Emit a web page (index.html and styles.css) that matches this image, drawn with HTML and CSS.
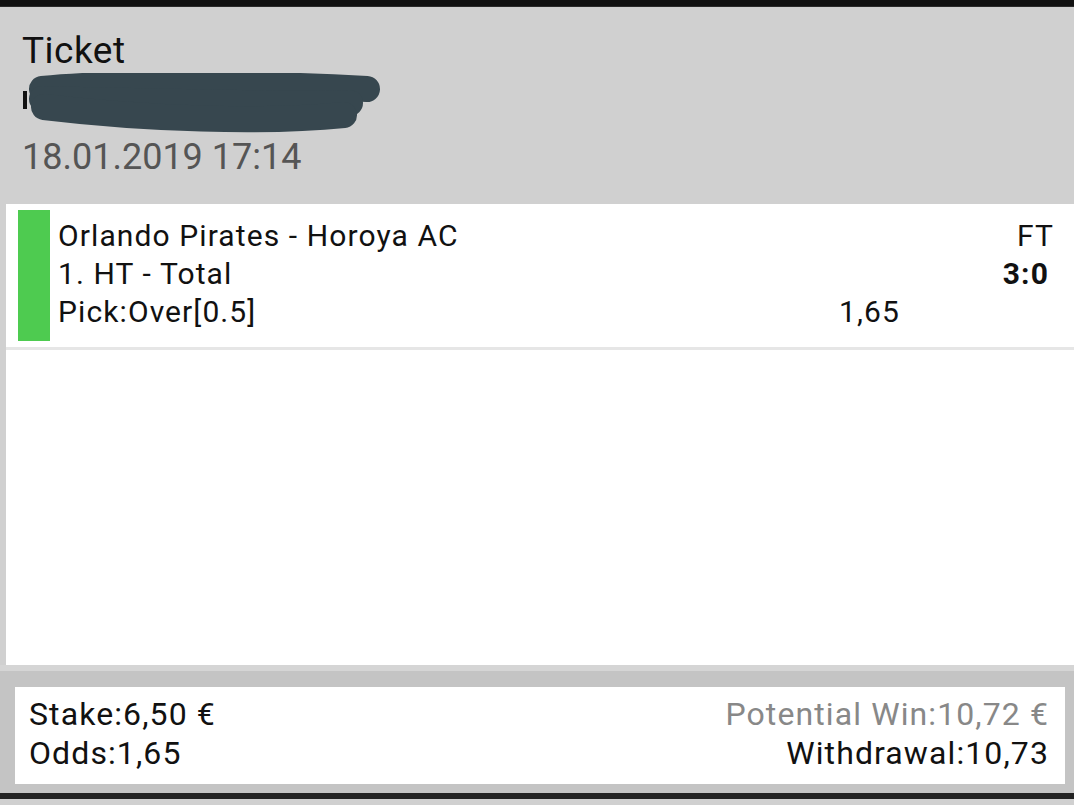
FILE: index.html
```html
<!DOCTYPE html>
<html>
<head>
    <meta charset="UTF-8">
    <title>Ticket</title>
    <link rel="stylesheet" href="styles.css">
</head>
<body>

    <div class="status_bar"></div>

    <div class="ticket_head">
        <div class="ticket_title">Ticket</div>
        <div class="ticket_id">
            <span class="id_mark"></span>
            <svg class="scribble" width="370" height="66" viewBox="0 0 370 66">
                <path d="M18 16 C 100 8, 230 10, 343 16" />
                <path d="M18 26 C 110 28, 230 32, 326 30" />
                <path d="M20 34 C 120 46, 240 50, 320 42" />
            </svg>
        </div>
        <div class="ticket_date">18.01.2019 17:14</div>
    </div>

    <div class="ticket_body">
        <div class="bet_row">
            <div class="bet_state"></div>
            <div class="bet_info">
                <div class="bet_name">Orlando Pirates - Horoya AC</div>
                <div class="bet_odds"></div>
                <div class="bet_result">FT</div>

                <div class="bet_name">1. HT - Total</div>
                <div class="bet_odds"></div>
                <div class="bet_result score">3:0</div>

                <div class="bet_name">Pick:Over[0.5]</div>
                <div class="bet_odds">1,65</div>
                <div class="bet_result"></div>
            </div>
        </div>
    </div>

    <div class="ticket_foot">
        <div class="foot_box">
            <div class="foot_col">
                <div>Stake:6,50 €</div>
                <div>Odds:1,65</div>
            </div>
            <div class="foot_col right">
                <div class="potential">Potential Win:10,72 €</div>
                <div>Withdrawal:10,73</div>
            </div>
        </div>
    </div>

    <div class="nav_bar"></div>

</body>
</html>
```

FILE: styles.css
```css
*{
    margin: 0;
    padding: 0;
    box-sizing: border-box;
}
body{
    width: 1074px;
    height: 805px;
    overflow: hidden;
    background: #d0d0d0;
    font-family: Roboto, "Noto Sans", sans-serif;
    color: #111;
}
.status_bar{
    height: 7px;
    background: #111;
    border-bottom: 1px solid #2a2a2a;
}
.ticket_head{
    height: 197px;
    padding: 22px 22px 0 22px;
}
.ticket_title{
    font-size: 37px;
    line-height: 44px;
    letter-spacing: 0.5px;
    color: #111;
}
.ticket_id{
    position: relative;
    height: 62px;
}
.id_mark{
    position: absolute;
    left: 1px;
    top: 18px;
    width: 4px;
    height: 18px;
    background: #111;
}
.scribble{
    position: absolute;
    left: 2px;
    top: 0;
}
.scribble path{
    fill: none;
    stroke: #37474f;
    stroke-width: 26px;
    stroke-linecap: round;
}
.ticket_date{
    font-size: 36px;
    line-height: 44px;
    color: #555;
}

.ticket_body{
    height: 461px;
    margin-left: 6px;
    background: #fff;
}
.bet_row{
    display: flex;
    padding: 6px 20px 6px 12px;
    border-bottom: 3px solid #e6e6e6;
}
.bet_state{
    width: 32px;
    height: 131px;
    background: #4ecb50;
}
.bet_info{
    flex: 1;
    display: grid;
    grid-template-columns: 1fr auto 150px;
    align-content: start;
    margin-left: 8px;
    padding-top: 7px;
    font-size: 30px;
    line-height: 38px;
    letter-spacing: 1.1px;
}
.bet_odds{
    padding-right: 4px;
}
.bet_result{
    text-align: right;
}
.score{
    font-weight: bold;
    padding-right: 5px;
}

.ticket_foot{
    height: 128px;
    background: #c4c4c4;
    border-top: 6px solid #d5d5d5;
    padding: 16px 9px 0 15px;
}
.foot_box{
    display: flex;
    justify-content: space-between;
    height: 97px;
    padding: 8px 16px 0 14px;
    background: #fff;
    font-size: 32px;
    line-height: 39px;
    letter-spacing: 1.1px;
}
.right{
    text-align: right;
}
.potential{
    color: #888;
}
.nav_bar{
    height: 6px;
    background: #222;
}
```
